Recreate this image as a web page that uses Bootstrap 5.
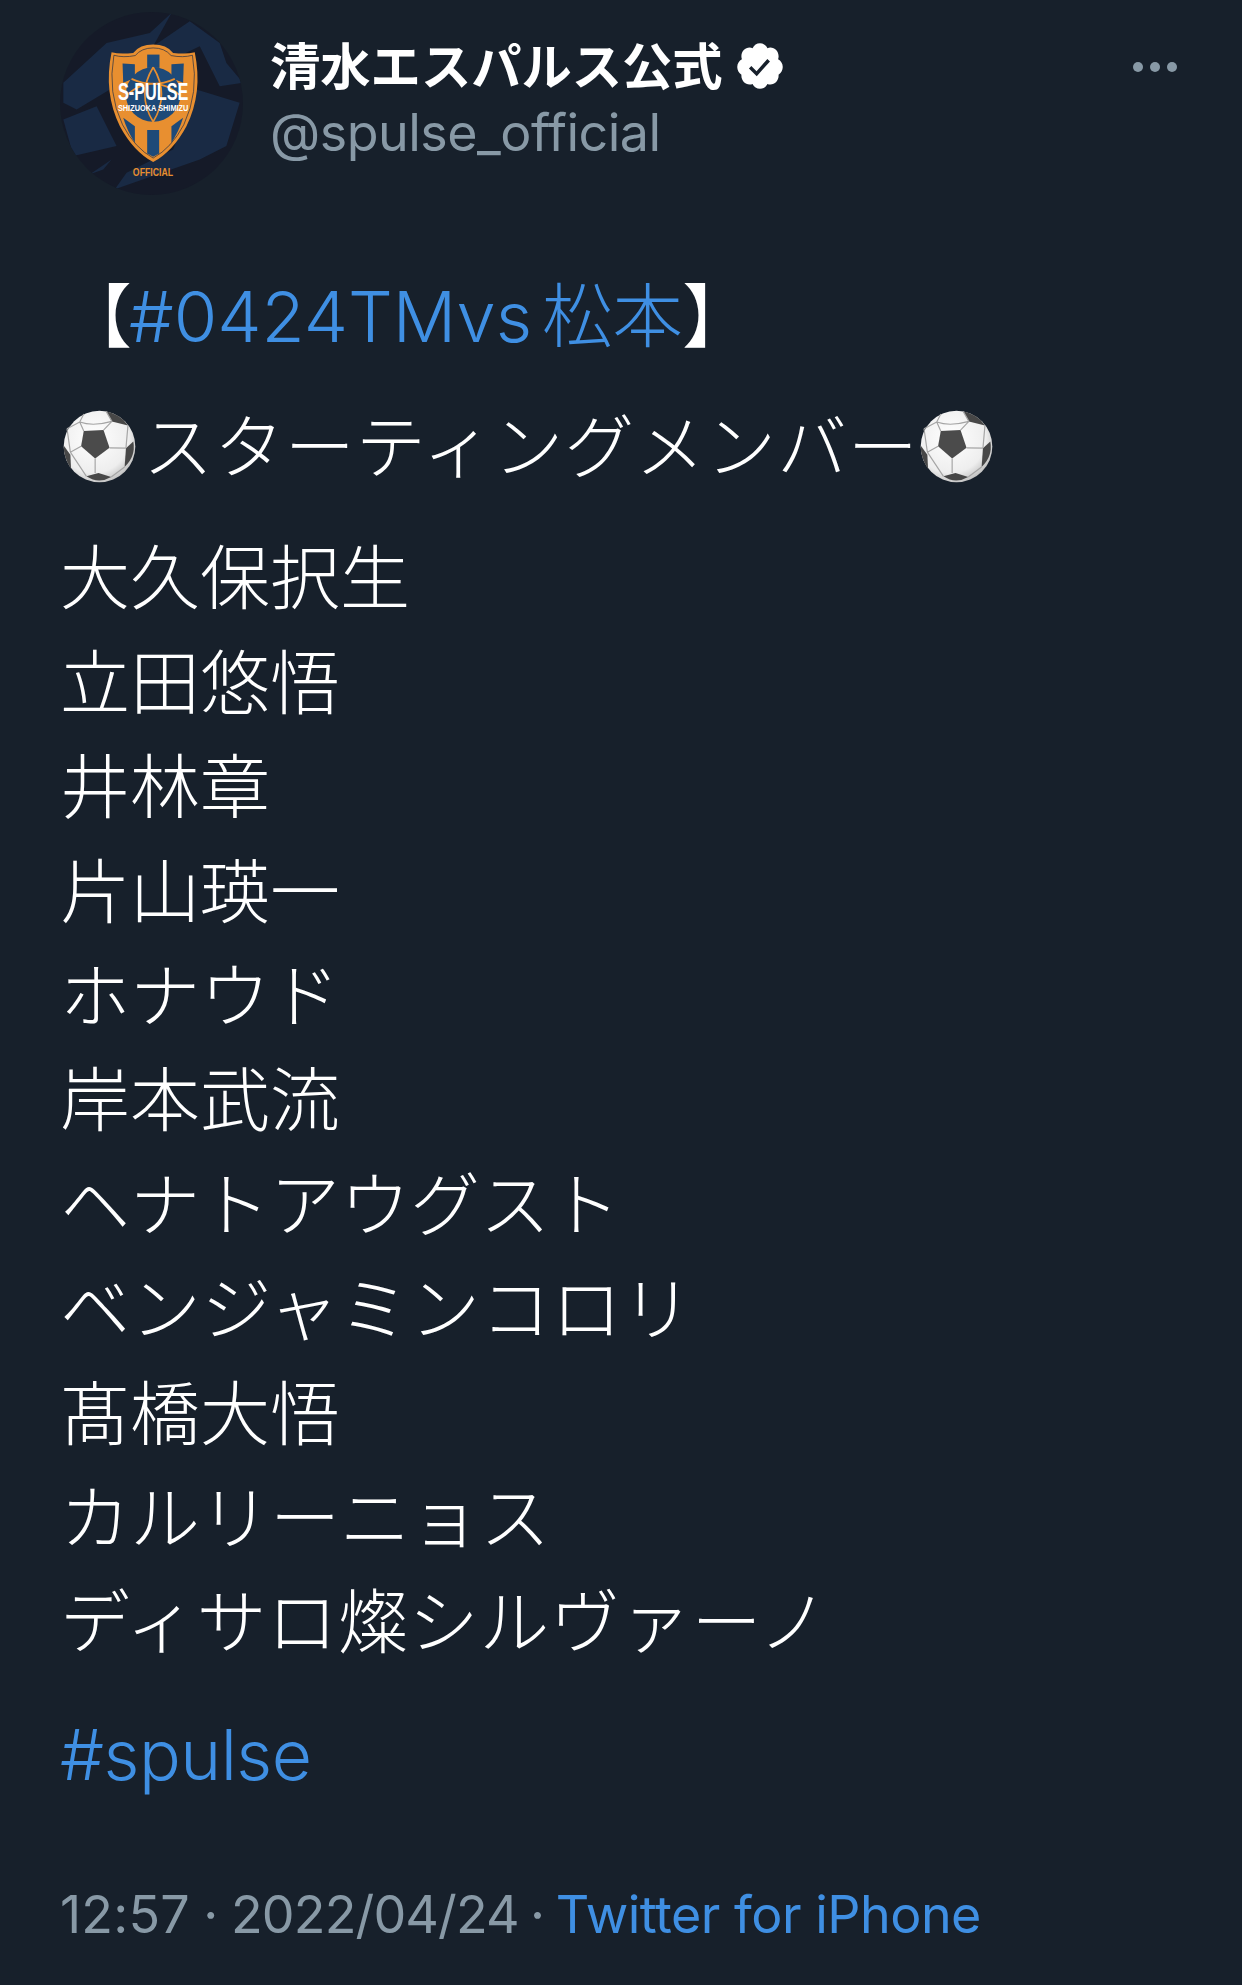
<!DOCTYPE html>
<html lang="ja">
<head>
  <meta charset="UTF-8">
  <title>清水エスパルス公式</title>
  <link rel="stylesheet" href="https://cdn.jsdelivr.net/npm/bootstrap@5.3.0/dist/css/bootstrap.min.css">
  <style>
    body {
      background-color: #17202b;
      color: #fff;
      font-family: Inter, "Noto Sans CJK JP", sans-serif;
      overflow: hidden;
    }
    .tweet-page { height: 1985px; padding: 12px 62px 0 60px; }
    .tweet-head { height: 183px; }
    .tweet-avatar { width: 183px; height: 183px; flex: none; }
    .tweet-who { margin-left: 27px; padding-top: 21px; }
    .tweet-name { font-size: 50.3px; line-height: 68px; font-weight: 700; white-space: nowrap; }
    .tweet-badge { width: 52px; height: 52px; margin-left: 11px; vertical-align: -7px; }
    .tweet-handle { font-size: 52px; line-height: 64px; color: #8899a6; letter-spacing: -0.5px; }
    .tweet-more { gap: 7px; margin-top: 50px; margin-right: 3px; }
    .tweet-more span { width: 10px; height: 10px; border-radius: 50%; background: #8899a6; }
    .tweet-body { margin-top: 70px; font-size: 70px; line-height: 104.4px; font-weight: 300; }
    .tweet-body p { white-space: nowrap; }
    .tweet-hash { margin-left: 2px; margin-bottom: 27px; }
    .tweet-kick { margin-bottom: 26.5px; letter-spacing: 0.9px; margin-left: 3px; }
    .tweet-names { margin-bottom: 27px; }
    .tweet-kana { letter-spacing: 0.7px; }
    .tweet-link { color: #3f8fe3; text-decoration: none; }
    .tweet-latin { word-spacing: -10px; font-size: 70.5px; margin-left: -3px; margin-right: -1px; }
    .tweet-ball { width: 73px; height: 73px; vertical-align: -10px; }
    .tweet-ball-a { margin-right: 7px; }
    .tweet-ball-b { margin-left: 1px; }
    .tweet-tag { font-size: 69.5px; letter-spacing: -0.5px; }
    .tweet-foot { margin-top: 76px; font-size: 52px; line-height: 64px; color: #8899a6; white-space: nowrap; letter-spacing: -0.4px; }
    .tweet-time { letter-spacing: 0.2px; }
    .tweet-date { letter-spacing: -0.85px; }
    .tweet-dot { margin: 0 -1px; }
    .tweet-dot-end { margin: 0 -3px; }
    .tweet-foot .tweet-link { letter-spacing: -0.5px; }
  </style>
</head>
<body>
  <svg width="0" height="0" class="position-absolute">
    <defs>
      <radialGradient id="ballShade" cx="0.42" cy="0.38" r="0.68">
        <stop offset="0" stop-color="#ffffff"/>
        <stop offset="0.72" stop-color="#eeeeee"/>
        <stop offset="1" stop-color="#b8b8b8"/>
      </radialGradient>
      <symbol id="ball" viewBox="76 62 218 218">
        <circle cx="185" cy="171" r="107" fill="url(#ballShade)"/>
        <path d="M138 125 L197 122 L215 175 L172 207 L130 170 Z" fill="#4b4b4b"/>
        <path d="M205 66 Q250 76 270 108 L222 96 Z" fill="#474747"/>
        <path d="M264 176 L286 156 Q294 200 260 232 Z" fill="#474747"/>
        <path d="M146 260 L182 250 L220 262 Q182 284 146 260 Z" fill="#474747"/>
        <path d="M78 168 L98 196 L100 238 Q78 205 78 168 Z" fill="#474747"/>
        <path d="M138 125 L126 98 M197 122 L222 96 M130 170 L98 188 M215 175 L264 176 M172 207 L172 250 M126 98 L138 74 M126 98 L88 118 M264 176 L270 108 M98 188 L88 118 M98 188 L146 260 M260 232 L220 262 M126 98 Q165 112 222 96 M205 66 L222 96" stroke="#a5a5a5" stroke-width="3.5" fill="none"/>
      </symbol>
    </defs>
  </svg>

  <div class="tweet-page">
    <div class="tweet-head d-flex">
      <svg class="tweet-avatar" viewBox="60 27 550 550">
        <defs><clipPath id="avatarClip"><circle cx="335" cy="302" r="275"/></clipPath></defs>
        <circle cx="335" cy="302" r="275" fill="#151a28"/>
        <g clip-path="url(#avatarClip)" fill="#192a44">
          <path d="M70 240 L200 120 L330 90 L395 30 L340 130 L450 55 L540 120 L560 180 L610 240 L540 250 L480 130 L210 260 L110 320 L70 300 Z"/>
          <path d="M70 350 L170 310 L230 430 L100 460 Z"/>
          <path d="M470 260 L600 300 L560 430 L480 470 L225 560 L260 510 L400 440 Z"/>
          <path d="M150 515 L215 470 L190 500 Z"/>
        </g>
        <path d="M340 125 Q380 125 400 150 Q440 155 465 148 Q490 270 440 370 Q400 445 340 478 Q280 445 240 370 Q190 270 215 148 Q240 155 280 150 Q300 125 340 125 Z" fill="#e88f30"/>
        <path d="M340 135 Q375 135 394 158 Q430 165 458 157 Q478 270 432 366 Q395 436 340 466 Q285 436 248 366 Q202 270 222 157 Q250 165 286 158 Q305 135 340 135 Z" fill="none" stroke="#1b2b45" stroke-width="2"/>
        <g fill="#1e4a78">
          <rect x="322" y="155" width="37" height="40"/>
          <path d="M248 182 L285 184 L285 225 L250 240 Z"/>
          <path d="M395 184 L432 182 L430 240 L395 225 Z"/>
          <path d="M322 382 L358 382 L358 452 L340 462 L322 452 Z"/>
          <path d="M250 345 L285 370 L285 420 Q262 385 250 345 Z"/>
          <path d="M430 345 L395 370 L395 420 Q418 385 430 345 Z"/>
          <circle cx="340" cy="275" r="82"/>
        </g>
        <path d="M262 275 Q340 210 418 275 M340 193 Q290 275 340 357 M340 193 Q390 275 340 357 M275 228 Q340 258 405 228" fill="none" stroke="#e88f30" stroke-width="5"/>
        <text x="234" y="290" font-family="Liberation Sans" font-weight="700" font-size="70" fill="#fff" textLength="212" lengthAdjust="spacingAndGlyphs">S-PULSE</text>
        <text x="234" y="325" font-family="Liberation Sans" font-weight="700" font-size="27" fill="#fff" textLength="212" lengthAdjust="spacingAndGlyphs">SHIZUOKA SHIMIZU</text>
        <text x="279" y="520" font-family="Liberation Sans" font-weight="700" font-size="35" fill="#e88f30" textLength="121" lengthAdjust="spacingAndGlyphs">OFFICIAL</text>
      </svg>
      <div class="tweet-who flex-grow-1">
        <div class="tweet-name">清水エスパルス公式<svg class="tweet-badge" viewBox="0 0 24 24"><path d="M22.5 12.5c0-1.58-.875-2.95-2.148-3.6.154-.435.238-.905.238-1.4 0-2.21-1.71-3.998-3.818-3.998-.47 0-.92.084-1.336.25C14.818 2.415 13.51 1.5 12 1.5s-2.816.917-3.437 2.25c-.415-.165-.866-.25-1.336-.25-2.11 0-3.818 1.79-3.818 4 0 .494.083.964.237 1.4-1.272.65-2.147 2.018-2.147 3.6 0 1.495.782 2.798 1.942 3.486-.02.17-.032.34-.032.514 0 2.21 1.708 4 3.818 4 .47 0 .92-.086 1.335-.25.62 1.334 1.926 2.25 3.437 2.25 1.512 0 2.818-.916 3.437-2.25.415.163.865.248 1.336.248 2.11 0 3.818-1.79 3.818-4 0-.174-.012-.344-.033-.513 1.158-.687 1.943-1.99 1.943-3.484z" fill="#fff"/><path d="M10.5 16.7l-3.6-3.6 1.1-1.1 2.4 2.4 5-5.6 1.2 1.1z" fill="#17202b"/></svg></div>
        <div class="tweet-handle">@spulse_official</div>
      </div>
      <div class="tweet-more d-flex align-items-start"><span></span><span></span><span></span></div>
    </div>

    <div class="tweet-body">
      <p class="tweet-hash">【<a class="tweet-link tweet-latin" href="#">#0424TMvs 松本</a>】</p>
      <p class="tweet-kick"><svg class="tweet-ball tweet-ball-a"><use href="#ball"/></svg>スターティングメンバー<svg class="tweet-ball tweet-ball-b"><use href="#ball"/></svg></p>
      <p class="tweet-names">大久保択生<br>立田悠悟<br>井林章<br>片山瑛一<br>ホナウド<br>岸本武流<br>ヘナトアウグスト<br><span class="tweet-kana">ベンジャミンコロリ</span><br>髙橋大悟<br>カルリーニョス<br><span class="tweet-kana">ディサロ燦シルヴァーノ</span></p>
      <p class="mb-0"><a class="tweet-link tweet-tag" href="#">#spulse</a></p>
    </div>

    <div class="tweet-foot"><span class="tweet-time">12:57</span> <span class="tweet-dot">·</span> <span class="tweet-date">2022/04/24</span> <span class="tweet-dot-end">·</span> <a class="tweet-link" href="#">Twitter for iPhone</a></div>
  </div>
</body>
</html>
